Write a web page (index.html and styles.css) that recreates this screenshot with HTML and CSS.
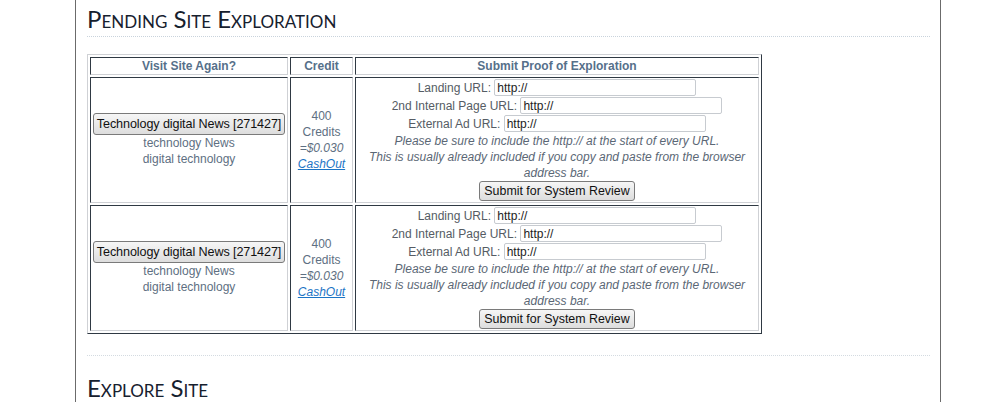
FILE: index.html
```html
<!DOCTYPE html>
<html lang="en">
<head>
  <meta charset="UTF-8">
  <meta name="viewport" content="width=device-width, initial-scale=1.0">
  <title>Pending Site Exploration</title>
  <link rel="stylesheet" href="styles.css">
</head>
<body>

  <div class="page">
    <h2 class="section-title">Pending Site Exploration</h2>

    <table class="pending">
      <tr>
        <th class="col-visit">Visit Site Again?</th>
        <th class="col-credit">Credit</th>
        <th class="col-proof">Submit Proof of Exploration</th>
      </tr>
      <tr>
        <td class="visit">
          <button class="btn">Technology digital News [271427]</button><br>
          technology News<br>
          digital technology
        </td>
        <td class="credit">
          400<br>Credits<br><em>=$0.030</em><br><a href="#">CashOut</a>
        </td>
        <td class="proof">
          <div class="field">Landing URL: <input type="text" value="http://"></div>
          <div class="field">2nd Internal Page URL: <input type="text" value="http://"></div>
          <div class="field">External Ad URL: <input type="text" value="http://"></div>
          <p class="note">Please be sure to include the http:// at the start of every URL.<br>
            This is usually already included if you copy and paste from the browser address bar.</p>
          <button class="btn">Submit for System Review</button>
        </td>
      </tr>
      <tr>
        <td class="visit">
          <button class="btn">Technology digital News [271427]</button><br>
          technology News<br>
          digital technology
        </td>
        <td class="credit">
          400<br>Credits<br><em>=$0.030</em><br><a href="#">CashOut</a>
        </td>
        <td class="proof">
          <div class="field">Landing URL: <input type="text" value="http://"></div>
          <div class="field">2nd Internal Page URL: <input type="text" value="http://"></div>
          <div class="field">External Ad URL: <input type="text" value="http://"></div>
          <p class="note">Please be sure to include the http:// at the start of every URL.<br>
            This is usually already included if you copy and paste from the browser address bar.</p>
          <button class="btn">Submit for System Review</button>
        </td>
      </tr>
    </table>

    <div class="divider"></div>

    <h2 class="section-title plain">Explore Site</h2>
  </div>

</body>
</html>
```

FILE: styles.css
```css
* {
  margin: 0;
  padding: 0;
  box-sizing: border-box;
}

body {
  font-family: 'Liberation Sans', Arial, sans-serif;
  font-size: 12px;
  background-color: #fff;
  overflow: hidden;
}

.page {
  width: 866px;
  min-height: 402px;
  margin-left: 75px;
  padding: 0 10px 0 11px;
  border-left: 1px solid #6b6b6b;
  border-right: 1px solid #6b6b6b;
}

.section-title {
  font-family: 'Lato', 'DejaVu Sans', sans-serif;
  font-variant: small-caps;
  font-weight: 400;
  font-size: 24px;
  line-height: 28px;
  color: #16202e;
  padding-top: 5px;
  padding-bottom: 3px;
  border-bottom: 1px dotted #c9d3dc;
}

.section-title.plain {
  border-bottom: none;
  padding-top: 0;
}

/* old style bordered table */
.pending {
  width: 675px;
  table-layout: fixed;
  margin-top: 17px;
  border-collapse: separate;
  border-spacing: 2px;
  border: 1px solid;
  border-color: #cfd1d5 #2f3943 #2f3943 #cfd1d5;
  text-align: center;
}

.pending th,
.pending td {
  border: 1px solid;
  border-color: #2f3943 #cfd1d5 #cfd1d5 #2f3943;
  padding: 1px;
}

.pending th {
  font-weight: bold;
  line-height: 14px;
  color: #56708a;
}

.col-visit { width: 198px; }
.col-credit { width: 63px; }
.col-proof { width: 404px; }

.pending td {
  line-height: 16px;
  color: #5e6f82;
  vertical-align: middle;
}

.credit em {
  font-style: italic;
}

.credit a {
  color: #1b74c5;
  font-style: italic;
  text-decoration: underline;
}

.field {
  line-height: 18px;
  height: 18px;
  color: #555c64;
}

.field input {
  width: 202px;
  height: 17px;
  padding: 0 2px;
  border: 1px solid #c7cbd0;
  border-radius: 2px;
  font-family: 'Liberation Sans', Arial, sans-serif;
  font-size: 12px;
  color: #222;
  vertical-align: top;
}

.note {
  font-style: italic;
  color: #5b6775;
  padding: 0 6px;
}

.btn {
  font-family: 'Liberation Sans', Arial, sans-serif;
  font-size: 12.4px;
  line-height: 16px;
  white-space: nowrap;
  color: #111;
  padding: 1px 4px;
  border: 1px solid #7a7a7a;
  border-radius: 3px;
  background: linear-gradient(#f6f6f6, #dddddd);
  cursor: pointer;
}

.visit .btn {
  font-size: 12.6px;
  letter-spacing: -0.1px;
  padding: 2px 3px;
}

.divider {
  margin-top: 21px;
  border-top: 1px dotted #d4dbe1;
  height: 19px;
}
```
